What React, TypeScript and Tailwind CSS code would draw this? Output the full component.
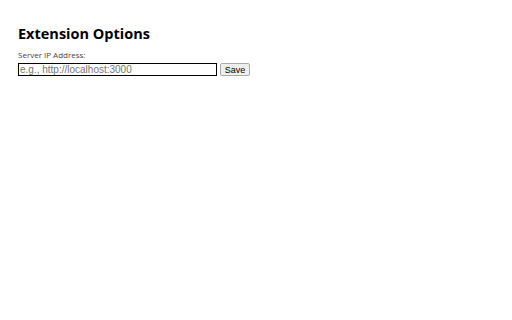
export default function App() {
  return (
    <div className="min-h-[320px] w-[512px] bg-white px-[18px] pt-[25px]">
      <h1 className="font-['Open_Sans',sans-serif] text-[14.5px] font-bold leading-[18px] text-black">
        Extension Options
      </h1>
      <label className="mt-[7px] block font-['Open_Sans',sans-serif] text-[8px] leading-[10px] text-[#444]">
        Server IP Address:
      </label>
      <div className="mt-[3px] flex items-center gap-[3px]">
        <input
          type="text"
          placeholder="e.g., http://localhost:3000"
          className="h-[13px] w-[199px] border-[1.5px] border-black px-[1px] font-['Liberation_Sans',sans-serif] text-[10px] leading-[10px] text-black outline-none placeholder:text-[#757575]"
        />
        <button className="h-[13px] w-[30px] rounded-[2px] border border-[#aaa] bg-[#efefef] font-['Liberation_Sans',sans-serif] text-[9px] leading-[10px] text-black">
          Save
        </button>
      </div>
    </div>
  );
}
